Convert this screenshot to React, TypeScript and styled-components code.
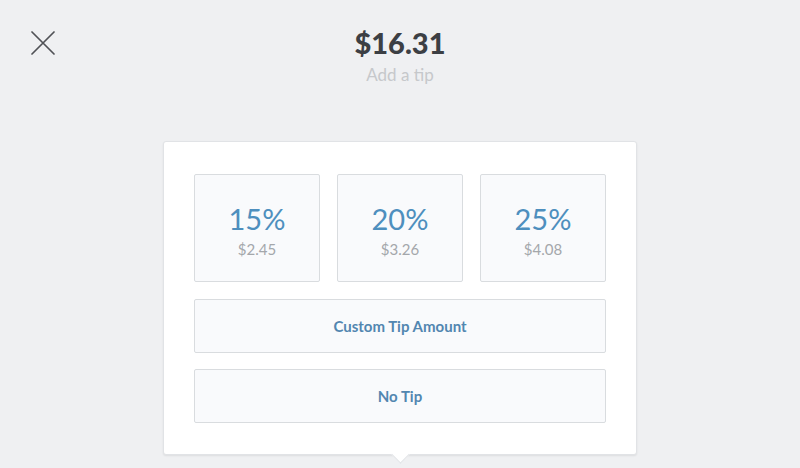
import React from "react";
import styled, { createGlobalStyle } from "styled-components";

const GlobalStyle = createGlobalStyle`
  html, body {
    margin: 0;
    padding: 0;
    background: #eff0f2;
    font-family: Lato, "Open Sans", "Liberation Sans", sans-serif;
  }
`;

const tips = [
  { percent: "15%", amount: "$2.45" },
  { percent: "20%", amount: "$3.26" },
  { percent: "25%", amount: "$4.08" },
];

const CloseIcon = () => (
  <svg width="24" height="24" viewBox="0 0 24 24">
    <path d="M1 1 L23 23 M23 1 L1 23" stroke="#505256" strokeWidth="1.7" strokeLinecap="round" fill="none" />
  </svg>
);

export default function App() {
  return (
    <Page>
      <GlobalStyle />
      <Header>
        <CloseButton>
          <CloseIcon />
        </CloseButton>
        <Heading>
          <Total>$16.31</Total>
          <Subtitle>Add a tip</Subtitle>
        </Heading>
        <div />
      </Header>
      <Card>
        <TipGrid>
          {tips.map((tip) => (
            <Tile key={tip.percent}>
              <Percent>{tip.percent}</Percent>
              <Amount>{tip.amount}</Amount>
            </Tile>
          ))}
        </TipGrid>
        <WideButton>Custom Tip Amount</WideButton>
        <WideButton>No Tip</WideButton>
      </Card>
    </Page>
  );
}

const Page = styled.div`
  width: 800px;
  height: 468px;
  overflow: hidden;
  display: flex;
  flex-direction: column;
  align-items: center;
  box-sizing: border-box;
  padding-top: 25px;
`;

const Header = styled.div`
  width: 100%;
  display: grid;
  grid-template-columns: 1fr auto 1fr;
  align-items: start;
`;

const CloseButton = styled.div`
  padding: 6px 0 0 31px;
  display: flex;
`;

const Heading = styled.div`
  display: flex;
  flex-direction: column;
  align-items: center;
`;

const Total = styled.div`
  font-size: 29px;
  line-height: 36px;
  font-weight: 900;
  color: #3c3f44;
`;

const Subtitle = styled.div`
  margin-top: 4px;
  font-size: 17px;
  line-height: 20px;
  color: #c6c8cb;
`;

const Card = styled.div`
  position: relative;
  margin-top: 56px;
  width: 474px;
  box-sizing: border-box;
  padding: 32px 30px 31px;
  background: #ffffff;
  border: 1px solid #e1e3e6;
  border-radius: 3px;
  box-shadow: 0 1px 2px rgba(0, 0, 0, 0.08);
  display: flex;
  flex-direction: column;
  gap: 16px;

  &::after {
    content: "";
    position: absolute;
    left: 50%;
    bottom: -7px;
    width: 12px;
    height: 12px;
    margin-left: -6px;
    background: #ffffff;
    border-right: 1px solid #e1e3e6;
    border-bottom: 1px solid #e1e3e6;
    transform: rotate(45deg);
  }
`;

const TipGrid = styled.div`
  display: grid;
  grid-template-columns: repeat(3, 1fr);
  gap: 17px;
  margin-bottom: 1px;
`;

const Tile = styled.div`
  height: 108px;
  box-sizing: border-box;
  background: #f9fafc;
  border: 1px solid #d9dcdf;
  border-radius: 2px;
  display: flex;
  flex-direction: column;
  align-items: center;
  justify-content: center;
  padding-top: 3px;
`;

const Percent = styled.div`
  font-size: 29px;
  line-height: 34px;
  color: #4e8fbe;
`;

const Amount = styled.div`
  margin-top: 4px;
  font-size: 15px;
  line-height: 18px;
  color: #a4a7ab;
`;

const WideButton = styled.div`
  height: 54px;
  box-sizing: border-box;
  background: #f9fafc;
  border: 1px solid #d9dcdf;
  border-radius: 2px;
  display: flex;
  align-items: center;
  justify-content: center;
  font-size: 15px;
  font-weight: 700;
  color: #5286b0;
`;
